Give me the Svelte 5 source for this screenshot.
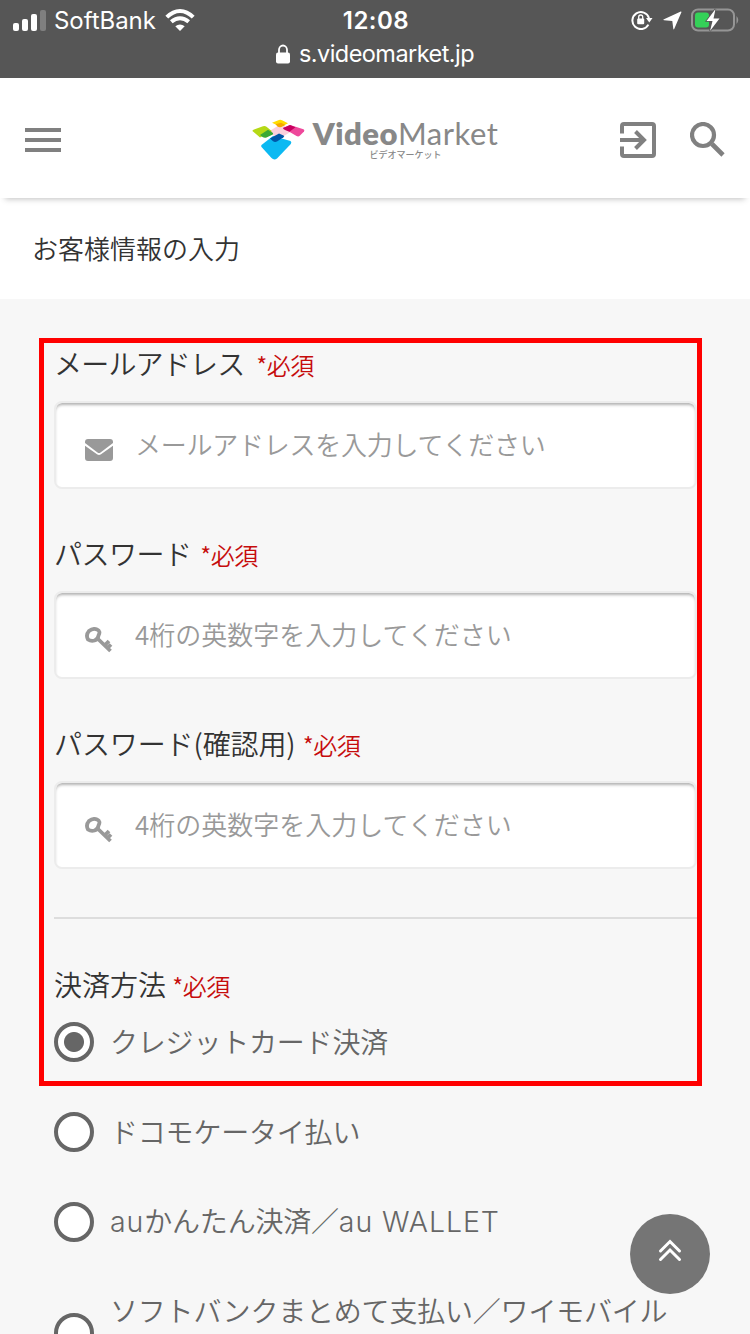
<script>
    const fields = [
        { label: "メールアドレス", placeholder: "メールアドレスを入力してください", icon: "mail", type: "email", spacing: -0.8, hint: -0.25 },
        { label: "パスワード", placeholder: "4桁の英数字を入力してください", icon: "key", type: "password", spacing: -0.5, hint: 0 },
        { label: "パスワード(確認用)", placeholder: "4桁の英数字を入力してください", icon: "key", type: "password", spacing: -0.1, hint: 0 },
    ];

    const methods = [
        { id: "card", label: "クレジットカード決済" },
        { id: "docomo", label: "ドコモケータイ払い" },
        { id: "au", brand: "au", label: "かんたん決済／", suffix: "au WALLET" },
        { id: "softbank", label: "ソフトバンクまとめて支払い／ワイモバイル", tall: true },
    ];

    let selected = $state("card");
</script>

<div class="screen">
    <div class="browser">
        <div class="status">
            <div class="carrier">
                <svg width="34" height="22" viewBox="0 0 34 22" fill="#fff">
                    <rect x="0" y="14" width="6" height="8" rx="2" />
                    <rect x="9" y="10" width="6" height="12" rx="2" />
                    <rect x="18" y="5" width="6" height="17" rx="2" />
                    <rect x="27" y="1" width="6" height="21" rx="2" fill="#7f7f7f" />
                </svg>
                <span>SoftBank</span>
                <svg class="wifi" width="30" height="22" viewBox="0 0 30 22">
                    <g fill="none" stroke="#fff" stroke-width="4">
                        <path d="M1.800 8.200Q8 2 15 2T28.200 8.200" />
                        <path d="M6.300 12.800Q10.500 9.200 15 9.200T23.700 12.800" />
                    </g>
                    <path d="M10.300 17.200Q15 13.600 19.700 17.200L15 22Z" fill="#fff" />
                </svg>
            </div>
            <div class="clock">12:08</div>
            <div class="indicators">
                <svg width="22" height="20" viewBox="0 0 22 20">
                    <path d="M17.400 14.600A8.500 8.500 0 1 1 18 8" fill="none" stroke="#fff" stroke-width="2" />
                    <path d="M15 8h6.500l-3.200 4.500Z" fill="#fff" />
                    <rect x="6.200" y="8.500" width="7" height="5.800" rx="1" fill="#fff" />
                    <path d="M7.700 9V7a2 2 0 0 1 4 0v2" fill="none" stroke="#fff" stroke-width="1.300" />
                </svg>
                <svg class="arrow" width="19" height="19" viewBox="0 0 19 19">
                    <path d="M17.800.6Q18.800.4 18.300 1.500L11.200 18Q10.500 19 10.300 17.800L9.300 10 1 9.200Q-.3 8.900 1 8.200Z" fill="#fff" />
                </svg>
                <svg width="48" height="24" viewBox="0 0 48 24">
                    <rect x="1" y="1.500" width="42" height="21" rx="6" fill="none" stroke="#959595" stroke-width="2" />
                    <path d="M45.500 8q3.500 4 0 8Z" fill="#959595" />
                    <rect x="4" y="4.500" width="14" height="15" rx="3" fill="#34d158" />
                    <path d="M24.500 1 15.500 13h6L19 23l9.500-12.500h-6Z" fill="#fff" stroke="#565656" stroke-width="1.600" paint-order="stroke" />
                </svg>
            </div>
        </div>
        <div class="address">
            <svg width="14" height="20" viewBox="0 0 14 20">
                <rect x="0" y="8.500" width="14" height="11" rx="2" fill="#fff" />
                <path d="M3 9.500V5.800a4 4.300 0 0 1 8 0v3.700" fill="none" stroke="#fff" stroke-width="1.800" />
            </svg>
            <span>s.videomarket.jp</span>
        </div>
    </div>

    <header>
        <button class="menu" aria-label="メニュー"><i></i><i></i><i></i></button>
        <div class="logo">
            <svg width="54" height="42" viewBox="0 0 54 42">
                <path d="M16 13 29 5 40 12 27 20Z" fill="#fbd0dc" />
                <path d="M1 12.500Q-.2 11.500 1.500 10.800L11 7.200Q13 6.500 14.500 7.700L20 12.200 8 18.500Z" fill="#b5d916" />
                <path d="M8 16 16 10.800 21 14Q21.500 15 20.300 15.700L14.500 18.500Q12.500 19.200 10.500 18Z" fill="#3aa935" />
                <path d="M20 3.800 27 1Q28.500.4 30 1.200L36 4.300 29 8Z" fill="#ffdc00" />
                <path d="M23.500 5.300 29 3.800 33.500 6 29 8Q27 8.600 25.500 7.400Z" fill="#f6a800" />
                <path d="M31 9 38 6 51.500 10.300Q53 11 52 12.500L48 16.500Q46.500 18 44.500 17Z" fill="#ee489b" />
                <path d="M31 9 38 6 43.500 8.200 37.500 12.800 33 11Q31 10 31 9Z" fill="#c8005f" />
                <path d="M9.500 26 21 17 38.500 22Q40 23 38.800 25L25 39.500Q22 41.500 19.500 39L9.500 28Q8.800 27 9.500 26Z" fill="#0cb9f2" />
                <path d="M18 19.500 27 14.500 31.500 16.500Q33 17.200 31.500 18.300L25 22.500Q23 23.500 21 22.300Z" fill="#0057a8" />
            </svg>
            <div class="wordmark">
                <div class="name"><b>Video</b>Market</div>
                <small>ビデオマーケット</small>
            </div>
        </div>
        <div class="tools">
            <svg width="36" height="36" viewBox="0 0 36 36" fill="none" stroke="#808080" stroke-width="4">
                <path d="M2 11.500V4a2 2 0 0 1 2-2h28a2 2 0 0 1 2 2v28a2 2 0 0 1-2 2H4a2 2 0 0 1-2-2v-7.500" />
                <path d="M0 18h24M15.500 9.500 24 18l-8.500 8.500" />
            </svg>
            <svg width="36" height="36" viewBox="0 0 36 36" fill="none" stroke="#808080">
                <circle cx="13" cy="13" r="11" stroke-width="4.200" />
                <path d="M22 22 33 33" stroke-width="4.600" />
            </svg>
        </div>
    </header>

    <h1>お客様情報の入力</h1>

    <main>
        <div class="highlight"></div>

        {#each fields as field}
            <label class="field">
                <span class="caption">
                    <span class="title" style="letter-spacing: {field.spacing}px; margin-right: {-field.spacing * field.label.length}px">{field.label}</span>
                    <em>*必須</em>
                </span>
                <span class="box">
                    {#if field.icon === "mail"}
                        <svg width="28" height="22" viewBox="0 0 28 22" fill="#999">
                            <path d="M3 0h22a3 3 0 0 1 3 3v1L15.500 13.500q-1.500 1-3 0L0 4V3a3 3 0 0 1 3-3Z" />
                            <path d="M0 6.800 12 15.300q2 1.200 4 0L28 6.800V19a3 3 0 0 1-3 3H3a3 3 0 0 1-3-3Z" />
                        </svg>
                    {:else}
                        <svg width="28" height="26" viewBox="0 0 28 26" fill="none" stroke="#999">
                            <path d="M4 4Q8 .8 12 2.500T13.500 8.500Q13 12.500 9.500 13.500T3 12.500Q.5 8 4 4Z" stroke-width="3.800" />
                            <path d="M12 11 25.500 24M19.500 18.500l4.500-4.500M23 20.500l3-3" stroke-width="3.800" />
                        </svg>
                    {/if}
                    <input type={field.type} placeholder={field.placeholder} style="letter-spacing: {field.hint}px" />
                </span>
            </label>
        {/each}

        <hr />

        <div class="caption">決済方法 <em>*必須</em></div>
        {#each methods as method}
            <label class="method" class:tall={method.tall}>
                <input type="radio" name="method" value={method.id} bind:group={selected} />
                <span>{#if method.brand}<span class="latin">{method.brand}</span>{/if}{method.label}{#if method.suffix}<span class="latin">{method.suffix}</span>{/if}</span>
            </label>
        {/each}
    </main>

    <button class="to-top" aria-label="ページの先頭へ">
        <svg width="24" height="24" viewBox="0 0 24 24" fill="none" stroke="#fff" stroke-width="3" stroke-linecap="round">
            <path d="M2.500 12 12 2.500 21.500 12M2.500 20.500 12 11l9.500 9.500" />
        </svg>
    </button>
</div>

<style>
    :global(body) {
        margin: 0;
    }

    .screen {
        position: relative;
        width: 750px;
        height: 1334px;
        overflow: hidden;
        background: #f7f7f7;
        color: #333;
        font-family: "Noto Sans CJK JP", sans-serif;
        font-weight: 350;
    }

    svg {
        display: block;
        flex: none;
    }

    button {
        border: 0;
        padding: 0;
    }

    .browser {
        height: 78px;
        background: #565656;
        color: #fff;
        font-family: Inter, sans-serif;
        font-weight: 400;
        font-size: 24px;
    }

    .status {
        display: grid;
        grid-template-columns: 1fr auto 1fr;
        align-items: center;
        height: 40px;
        padding: 0 11px 0 13px;
    }

    .carrier {
        display: flex;
        align-items: center;
        gap: 7px;
        letter-spacing: -0.05px;
    }

    .wifi {
        margin-left: 2px;
    }

    .clock {
        font-weight: 600;
        letter-spacing: 0.5px;
    }

    .indicators {
        display: flex;
        justify-content: flex-end;
        align-items: center;
    }

    .arrow {
        margin: 0 9px 0 10px;
    }

    .address {
        display: flex;
        justify-content: center;
        align-items: center;
        gap: 9px;
        height: 27px;
        font-size: 23.5px;
        letter-spacing: -0.55px;
    }

    header {
        position: relative;
        display: flex;
        align-items: center;
        justify-content: space-between;
        height: 120px;
        padding: 0 24px 0 25px;
        box-sizing: border-box;
        background: #fff;
        box-shadow: 0 6px 6px -5px rgba(0, 0, 0, 0.25);
    }

    .menu {
        display: flex;
        flex-direction: column;
        gap: 6px;
        width: 105px;
        padding-top: 4px;
        background: none;
    }

    .menu i {
        width: 36px;
        height: 4px;
        background: #808080;
    }

    .logo {
        display: flex;
        align-items: flex-start;
        gap: 7px;
        padding-top: 6px;
    }

    .wordmark {
        display: flex;
        flex-direction: column;
        align-items: center;
        color: #888;
    }

    .name {
        font: 400 31px/28px Lato, sans-serif;
        letter-spacing: 0.5px;
        white-space: nowrap;
    }

    .name b {
        font-weight: 800;
    }

    small {
        font-size: 9px;
        line-height: 16px;
        font-weight: 500;
    }

    .tools {
        display: flex;
        gap: 34px;
        padding-top: 4px;
    }

    h1 {
        height: 101px;
        margin: 0;
        padding-left: 32px;
        background: #fff;
        font-size: 26px;
        font-weight: 350;
        line-height: 99px;
    }

    main {
        position: relative;
        padding: 43px 54px 0;
    }

    /* frame drawn over the required part of the form */
    .highlight {
        position: absolute;
        z-index: 1;
        top: 39px;
        left: 39px;
        width: 653px;
        height: 738px;
        border: 5px solid #f00;
        pointer-events: none;
    }

    .field {
        display: block;
        height: 190px;
    }

    .caption {
        display: block;
        height: 42px;
        font-size: 28px;
        line-height: 42px;
    }

    .title {
        display: inline-block;
    }

    em {
        color: #c60c0c;
        font-size: 24px;
        font-style: normal;
        letter-spacing: -0.5px;
    }

    .box {
        display: flex;
        align-items: center;
        width: 643px;
        height: 88px;
        margin-top: 17px;
        padding-left: 29px;
        gap: 22px;
        box-sizing: border-box;
        border: 2px solid #ececec;
        border-radius: 8px;
        background: #fff;
        box-shadow: inset 0 3px 3px -1px rgba(0, 0, 0, 0.3);
    }

    .box svg {
        margin-top: 9px;
    }

    .box input {
        flex: 1;
        min-width: 0;
        height: 60px;
        margin-bottom: 3px;
        padding: 0;
        border: 0;
        outline: 0;
        background: none;
        font: inherit;
        font-size: 26px;
    }

    .box input::placeholder {
        color: #999;
        opacity: 1;
    }

    hr {
        width: 644px;
        height: 2px;
        margin: 5px 0 44px;
        border: 0;
        background: #ddd;
    }

    .method {
        display: flex;
        align-items: center;
        gap: 16px;
        height: 42px;
        margin: 16px 0 48px;
        color: #666;
        font-size: 28px;
        line-height: 42px;
        letter-spacing: -0.2px;
        white-space: nowrap;
    }

    .method > span {
        margin-top: -2px;
    }

    .method.tall {
        height: 84px;
    }

    .tall span {
        align-self: flex-start;
    }

    .latin {
        font-family: Inter, sans-serif;
        font-size: 28.5px;
        font-weight: 300;
        letter-spacing: 0.9px;
    }

    .method input {
        appearance: none;
        flex: none;
        width: 40px;
        height: 40px;
        margin: 0;
        border: 4px solid #666;
        border-radius: 50%;
        background: #fff;
    }

    .method input:checked {
        background: radial-gradient(circle, #666 9.500px, #fff 10.500px);
    }

    .to-top {
        position: absolute;
        z-index: 2;
        left: 630px;
        top: 1214px;
        display: flex;
        justify-content: center;
        align-items: center;
        width: 80px;
        height: 80px;
        padding-bottom: 7px;
        border-radius: 50%;
        background: #757575;
    }
</style>
